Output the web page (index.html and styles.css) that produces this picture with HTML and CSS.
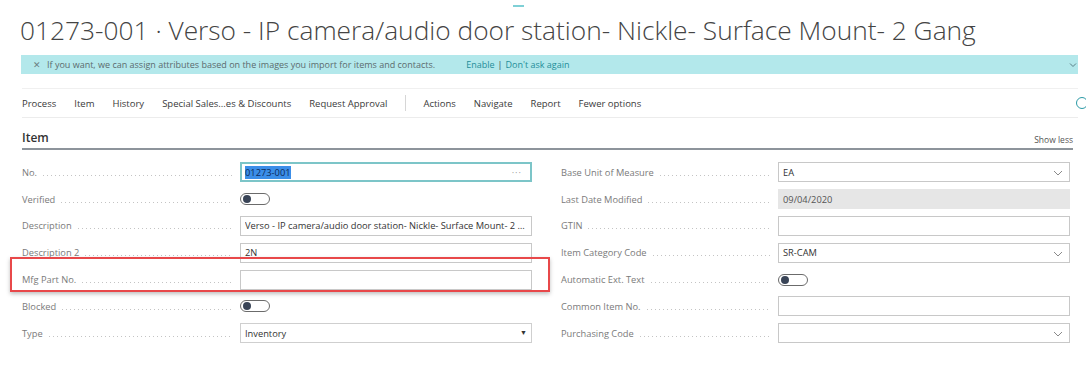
FILE: index.html
```html
<!DOCTYPE html>
<html lang="en">
<head>
  <meta charset="UTF-8" />
  <meta name="viewport" content="width=device-width, initial-scale=1.0" />
  <title>Item Card</title>
  <link rel="stylesheet" href="styles.css">
</head>
<body>
  <div class="page">
    <div class="scroll-mark"></div>
    <h1 class="title">01273-001 · Verso - IP camera/audio door station- Nickle- Surface Mount- 2 Gang</h1>

    <div class="banner">
      <span class="banner-close">&#x2715;</span>
      <span class="banner-text">If you want, we can assign attributes based on the images you import for items and contacts.</span>
      <a href="#" class="banner-link">Enable</a>
      <span class="banner-sep">|</span>
      <a href="#" class="banner-link">Don't ask again</a>
      <svg class="banner-chev" width="8" height="6" viewBox="0 0 8 6"><path d="M1 1.5 L4 4.5 L7 1.5" fill="none" stroke="#5a7f86" stroke-width="1"/></svg>
    </div>

    <div class="actionbar">
      <a href="#">Process</a>
      <a href="#">Item</a>
      <a href="#">History</a>
      <a href="#">Special Sales...es &amp; Discounts</a>
      <a href="#">Request Approval</a>
      <span class="action-sep"></span>
      <a href="#">Actions</a>
      <a href="#">Navigate</a>
      <a href="#">Report</a>
      <a href="#">Fewer options</a>
      <span class="action-icon"></span>
    </div>

    <section class="fasttab">
      <div class="tab-head">
        <span class="tab-title">Item</span>
        <a href="#" class="tab-toggle">Show less</a>
      </div>

      <div class="fields">
        <div class="column">
          <div class="row">
            <label class="label"><span>No.</span><i class="leader"></i></label>
            <div class="input focused"><span class="selected">01273-001</span><span class="more">&middot;&middot;&middot;</span></div>
          </div>
          <div class="row">
            <label class="label"><span>Verified</span><i class="leader"></i></label>
            <div class="toggle"><span class="knob"></span></div>
          </div>
          <div class="row">
            <label class="label"><span>Description</span><i class="leader"></i></label>
            <div class="input"><span class="clip">Verso - IP camera/audio door station- Nickle- Surface Mount- 2 Gang</span></div>
          </div>
          <div class="row">
            <label class="label"><span>Description 2</span><i class="leader"></i></label>
            <div class="input">2N</div>
          </div>
          <div class="row marked">
            <label class="label"><span>Mfg Part No.</span><i class="leader"></i></label>
            <div class="input"></div>
            <div class="highlight"></div>
          </div>
          <div class="row">
            <label class="label"><span>Blocked</span><i class="leader"></i></label>
            <div class="toggle"><span class="knob"></span></div>
          </div>
          <div class="row">
            <label class="label"><span>Type</span><i class="leader"></i></label>
            <div class="input select">Inventory<span class="caret">&#x25BC;</span></div>
          </div>
        </div>

        <div class="column">
          <div class="row">
            <label class="label"><span>Base Unit of Measure</span><i class="leader"></i></label>
            <div class="input dropdown">EA<svg class="chev" width="10" height="6" viewBox="0 0 10 6"><path d="M1 1 L5 5 L9 1" fill="none" stroke="#8a8a8a" stroke-width="1"/></svg></div>
          </div>
          <div class="row">
            <label class="label"><span>Last Date Modified</span><i class="leader"></i></label>
            <div class="input readonly">09/04/2020</div>
          </div>
          <div class="row">
            <label class="label"><span>GTIN</span><i class="leader"></i></label>
            <div class="input"></div>
          </div>
          <div class="row">
            <label class="label"><span>Item Category Code</span><i class="leader"></i></label>
            <div class="input dropdown">SR-CAM<svg class="chev" width="10" height="6" viewBox="0 0 10 6"><path d="M1 1 L5 5 L9 1" fill="none" stroke="#8a8a8a" stroke-width="1"/></svg></div>
          </div>
          <div class="row">
            <label class="label"><span>Automatic Ext. Text</span><i class="leader"></i></label>
            <div class="toggle"><span class="knob"></span></div>
          </div>
          <div class="row">
            <label class="label"><span>Common Item No.</span><i class="leader"></i></label>
            <div class="input"></div>
          </div>
          <div class="row">
            <label class="label"><span>Purchasing Code</span><i class="leader"></i></label>
            <div class="input dropdown"><svg class="chev" width="10" height="6" viewBox="0 0 10 6"><path d="M1 1 L5 5 L9 1" fill="none" stroke="#8a8a8a" stroke-width="1"/></svg></div>
          </div>
        </div>
      </div>
    </section>
  </div>
</body>
</html>
```

FILE: styles.css
```css
body {
  margin: 0;
  font-family: 'Open Sans', 'Noto Sans', sans-serif;
  background-color: #fff;
  color: #333;
  overflow: hidden;
}
.page {
  position: relative;
  padding: 0 0 0 22px;
  width: 1056px;
}
.scroll-mark {
  position: absolute;
  left: 513px;
  top: 5px;
  width: 11px;
  height: 2px;
  background-color: #7fd0d6;
}
.title {
  margin: 0 0 0 -2px;
  padding-top: 14px;
  height: 55px;
  box-sizing: border-box;
  font-size: 26.3px;
  font-weight: 300;
  line-height: 33px;
  color: #444;
  white-space: nowrap;
}
.banner {
  display: flex;
  align-items: center;
  height: 19px;
  margin-left: -1px;
  width: 1057px;
  background-color: #b3e8eb;
  font-size: 9px;
  color: #5b6b6e;
  position: relative;
}
.banner-close {
  margin-left: 12px;
  margin-right: 6px;
  font-size: 9px;
  color: #6c7f82;
}
.banner-text {
  margin-right: 31px;
}
.banner-link {
  color: #1f8d99;
  text-decoration: none;
}
.banner-sep {
  margin: 0 3px;
  color: #3c4a4c;
}
.banner-chev {
  position: absolute;
  right: 1px;
  top: 7px;
}
.actionbar {
  display: flex;
  align-items: center;
  margin-top: 14px;
  height: 28px;
  width: 1056px;
  border-top: 1px solid #f0f0f0;
  border-bottom: 1px solid #ececec;
  font-size: 9.5px;
  position: relative;
}
.actionbar a {
  color: #3a3a3a;
  text-decoration: none;
  margin-right: 18px;
}
.action-sep {
  width: 1px;
  height: 16px;
  background-color: #d6d6d6;
  margin: 0 17px 0 0;
}
.action-icon {
  position: absolute;
  right: -10px;
  top: 8px;
  width: 10px;
  height: 10px;
  border: 1px solid #2c9aa6;
  border-radius: 50%;
}
.fasttab {
  margin-top: 8px;
  width: 1051px;
}
.tab-head {
  display: flex;
  justify-content: space-between;
  align-items: flex-end;
  height: 20px;
  padding-bottom: 2px;
  border-bottom: 2px solid #8d949b;
}
.tab-title {
  font-size: 12px;
  font-weight: 600;
  color: #333;
  line-height: 16px;
}
.tab-toggle {
  font-size: 8.5px;
  color: #555;
  text-decoration: none;
  line-height: 12px;
}
.fields {
  display: grid;
  grid-template-columns: 510px 509px;
  column-gap: 29px;
  margin-top: 9px;
}
.row {
  display: flex;
  align-items: center;
  height: 26.8px;
  position: relative;
}
.label {
  display: flex;
  align-items: baseline;
  width: 210px;
  margin-right: 8px;
  font-size: 9.3px;
  color: #7a7a7a;
  white-space: nowrap;
}
.column:last-child .label {
  width: 209px;
}
.leader {
  flex: 1;
  height: 1px;
  margin-left: 6px;
  background-image: linear-gradient(to right, #c4c4c4 1px, transparent 1px);
  background-size: 4px 1px;
  background-repeat: repeat-x;
}
.input {
  display: flex;
  align-items: center;
  box-sizing: border-box;
  width: 292px;
  height: 20px;
  padding: 0 4px;
  border: 1px solid #c8c8c8;
  background-color: #fff;
  font-size: 9.3px;
  color: #333;
  position: relative;
  overflow: hidden;
}
.input.focused {
  border: 2px solid #7cc5c8;
  padding: 0 3px;
}
.selected {
  background-color: #3b8ee8;
  color: #0e2b5a;
}
.more {
  position: absolute;
  right: 8px;
  color: #999;
  letter-spacing: 1px;
}
.clip {
  white-space: nowrap;
  overflow: hidden;
  text-overflow: ellipsis;
}
.input.readonly {
  background-color: #e6e6e6;
  border-color: #e6e6e6;
  color: #555;
}
.input.select {
  border-color: #cfcfcf;
}
.caret {
  position: absolute;
  right: 4px;
  top: 4px;
  font-size: 7px;
  color: #333;
}
.chev {
  position: absolute;
  right: 6px;
  top: 7px;
}
.toggle {
  position: relative;
  box-sizing: border-box;
  width: 30px;
  height: 12px;
  border: 1px solid #6b6b6b;
  border-radius: 7px;
}
.knob {
  position: absolute;
  left: 2px;
  top: 1px;
  width: 8px;
  height: 8px;
  border-radius: 50%;
  background-color: #394457;
}
.highlight {
  position: absolute;
  left: -12px;
  top: -9px;
  width: 540px;
  height: 35px;
  box-sizing: border-box;
  border: 2px solid #e8484a;
  box-shadow: 0 2px 4px rgba(0, 0, 0, 0.25);
  pointer-events: none;
}
```
